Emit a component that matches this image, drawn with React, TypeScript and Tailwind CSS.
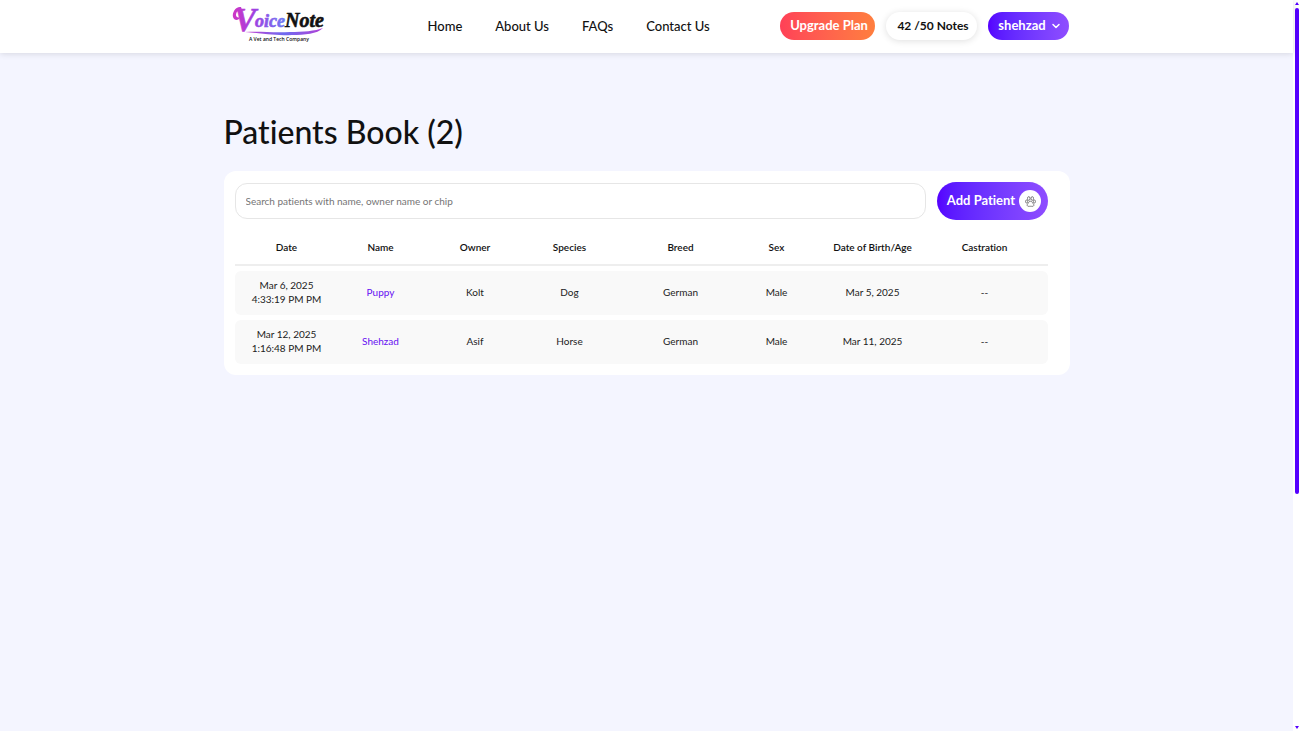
import { ChevronDown } from 'lucide-react';

interface Patient {
  date: string;
  time: string;
  name: string;
  owner: string;
  species: string;
  breed: string;
  sex: string;
  dob: string;
  castration: string;
}

const links = ['Home', 'About Us', 'FAQs', 'Contact Us'];

const columns = [
  { label: 'Date', width: 'w-[104px]' },
  { label: 'Name', width: 'w-[84px]' },
  { label: 'Owner', width: 'w-[105px]' },
  { label: 'Species', width: 'w-[84px]' },
  { label: 'Breed', width: 'w-[138px]' },
  { label: 'Sex', width: 'w-[54px]' },
  { label: 'Date of Birth/Age', width: 'w-[138px]' },
  { label: 'Castration', width: 'w-[106px] pr-5' },
];

const patients: Patient[] = [
  {
    date: 'Mar 6, 2025',
    time: '4:33:19 PM PM',
    name: 'Puppy',
    owner: 'Kolt',
    species: 'Dog',
    breed: 'German',
    sex: 'Male',
    dob: 'Mar 5, 2025',
    castration: '--',
  },
  {
    date: 'Mar 12, 2025',
    time: '1:16:48 PM PM',
    name: 'Shehzad',
    owner: 'Asif',
    species: 'Horse',
    breed: 'German',
    sex: 'Male',
    dob: 'Mar 11, 2025',
    castration: '--',
  },
];

function Logo() {
  return (
    <svg viewBox="0 -6 96 48" className="h-12 w-24" role="img" aria-label="VoiceNote">
      <defs>
        <linearGradient id="voice" gradientUnits="userSpaceOnUse" x1="0" y1="0" x2="54" y2="0">
          <stop offset="0" stopColor="#d136c4" />
          <stop offset="0.4" stopColor="#a03fe0" />
          <stop offset="1" stopColor="#6a7bf5" />
        </linearGradient>
        <linearGradient id="swash" x1="0" y1="0" x2="1" y2="0">
          <stop offset="0" stopColor="#c23ad0" />
          <stop offset="0.5" stopColor="#6f6cf0" />
          <stop offset="1" stopColor="#b13fd6" />
        </linearGradient>
      </defs>
      <path
        d="M9 1C4 0 0 6 1 11c1 4 6 4 7 0-2 1-4 0-4-2 0-3 2-5 6-5z"
        fill="url(#voice)"
      />
      <g fontFamily="Liberation Serif, serif" fontStyle="italic" fontWeight="700" strokeWidth="0.6">
        <text x="2" y="25" fontSize="33" fill="url(#voice)" stroke="url(#voice)">V</text>
        <text x="23" y="21" fontSize="18" fill="url(#voice)" stroke="url(#voice)">oice</text>
        <text x="53" y="21" fontSize="20" fill="#111" stroke="#111">Note</text>
      </g>
      <path d="M13 26c16-1 28 1 45 0 13 0 25-1 33-4-6 6-18 7-31 7-20 1-33-2-47-3z" fill="url(#swash)" />
      <text x="17" y="35" fontSize="5" fontWeight="600" fontFamily="Open Sans, sans-serif" fill="#111">
        A Vet and Tech Company
      </text>
    </svg>
  );
}

function PawIcon() {
  return (
    <svg viewBox="0 0 22 22" className="size-[11px]" fill="none" stroke="#555" strokeWidth="1.5" aria-hidden="true">
      <ellipse cx="7.5" cy="5" rx="2.5" ry="3.8" />
      <ellipse cx="14.5" cy="5" rx="2.5" ry="3.8" />
      <ellipse cx="3.2" cy="11" rx="2.1" ry="3" />
      <ellipse cx="18.8" cy="11" rx="2.1" ry="3" />
      <path d="M11 10.5c-3 0-3.500 2.500-5 4.300-1.500 1.700-2 3-1.500 4.400 1 2.300 4 1.300 6.500 1.300s5.500 1 6.500-1.300c.5-1.400 0-2.700-1.500-4.400-1.500-1.800-2-4.300-5-4.300z" />
    </svg>
  );
}

function Header() {
  return (
    <header className="relative h-[53px] bg-white pb-px shadow-[0_1px_6px_rgba(0,0,0,0.12)]">
      <div className="mx-auto flex h-full max-w-[846px] items-center">
        <a href="#" className="mb-1 ml-2 shrink-0">
          <Logo />
        </a>
        <nav className="ml-[100px] flex flex-1 gap-[33px] pt-[2px] text-[13px] font-medium text-[#111]">
          {links.map((link) => (
            <a key={link} href="#" className="whitespace-nowrap">
              {link}
            </a>
          ))}
        </nav>
        <div className="flex shrink-0 gap-[11px] pr-px text-[13px] font-bold whitespace-nowrap">
          <button className="h-7 w-[95px] rounded-full bg-linear-to-r from-[#ff4057] to-[#ff7e3e] pl-1 text-white">
            Upgrade Plan
          </button>
          <div className="flex h-7 w-[91px] items-center justify-center rounded-full bg-white pl-1 text-xs text-[#111] shadow-[0_1px_7px_rgba(0,0,0,0.13)]">
            42 /50 Notes
          </div>
          <button className="flex h-7 w-[81px] items-center justify-center gap-1 rounded-full bg-linear-to-r from-[#5500ff] to-[#8f4dff] pl-1 text-white">
            shehzad
            <ChevronDown className="size-3" strokeWidth={3} />
          </button>
        </div>
      </div>
    </header>
  );
}

function PatientTable() {
  return (
    <table className="mt-[5px] w-full table-fixed border-separate border-spacing-x-0 border-spacing-y-[5px] text-center text-[10px] leading-[14px] text-[#222]">
      <thead>
        <tr className="h-9">
          {columns.map((column) => (
            <th key={column.label} scope="col" className={`border-b-2 border-[#eeeeee] font-semibold text-[#111] ${column.width}`}>
              {column.label}
            </th>
          ))}
        </tr>
      </thead>
      <tbody>
        {patients.map((patient) => (
          <tr key={patient.name} className="h-11 bg-[#f9f9f9] *:pb-[2px]">
            <td className="rounded-l-md">
              {patient.date}
              <br />
              {patient.time}
            </td>
            <td>
              <a href="#" className="text-[#6610f2]">
                {patient.name}
              </a>
            </td>
            <td>{patient.owner}</td>
            <td>{patient.species}</td>
            <td>{patient.breed}</td>
            <td>{patient.sex}</td>
            <td>{patient.dob}</td>
            <td className="rounded-r-md pr-5">{patient.castration}</td>
          </tr>
        ))}
      </tbody>
    </table>
  );
}

function ScrollTrack() {
  return (
    <div className="flex w-[7px] shrink-0 flex-col items-center bg-white py-[2px]" aria-hidden="true">
      <svg viewBox="0 0 4 3" className="h-[3px] w-1">
        <path d="M0 3 2 0l2 3z" fill="#5500ff" />
      </svg>
      <div className="my-[3px] flex w-1 flex-1 flex-col">
        <div className="h-[68%] rounded-full bg-[#5500ff]" />
      </div>
      <svg viewBox="0 0 4 3" className="h-[3px] w-1">
        <path d="M0 0h4L2 3z" fill="#5500ff" />
      </svg>
    </div>
  );
}

export default function App() {
  return (
    <div className="flex h-screen bg-[#f4f5ff] font-[Lato,sans-serif] [font-variant-ligatures:none]">
      <div className="min-w-0 flex-1">
        <Header />
        <main className="mx-auto max-w-[846px] pt-[55px]">
          <h1 className="text-[32px] leading-[48px] font-medium text-[#111]">Patients Book (2)</h1>
          <section className="mt-[15px] rounded-xl bg-white pt-[11px] pr-[22px] pb-[6px] pl-[11px]">
            <div className="flex items-center gap-[11px]">
              <input
                type="search"
                aria-label="Search patients"
                placeholder="Search patients with name, owner name or chip"
                className="h-9 min-w-0 flex-1 rounded-xl border border-[#e6e6e6] px-[10px] text-[10px] placeholder:text-[#757575]"
              />
              <button className="flex h-[38px] w-[111px] items-center justify-center gap-1 rounded-full bg-linear-to-r from-[#5500ff] to-[#8f4dff] pl-1 text-[13px] font-bold whitespace-nowrap text-white">
                Add Patient
                <span className="flex size-[22px] items-center justify-center rounded-full bg-white">
                  <PawIcon />
                </span>
              </button>
            </div>
            <PatientTable />
          </section>
        </main>
      </div>
      <ScrollTrack />
    </div>
  );
}
